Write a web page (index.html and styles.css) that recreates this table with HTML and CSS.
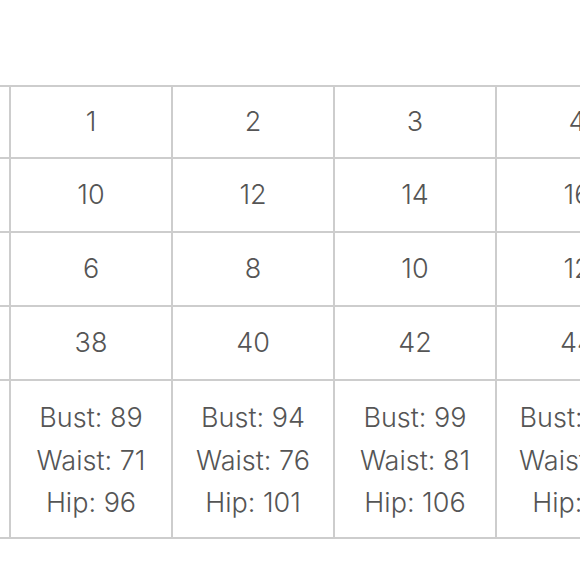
FILE: index.html
```html
<!DOCTYPE html>
<html lang="en">
<head>
<meta charset="utf-8">
<title>Size chart</title>
<link rel="stylesheet" href="styles.css">
</head>
<body>
<div class="wrap">
  <div class="chart">
    <div class="cell lead"></div>
    <div class="cell">1</div>
    <div class="cell">2</div>
    <div class="cell">3</div>
    <div class="cell">4</div>

    <div class="cell lead"></div>
    <div class="cell">10</div>
    <div class="cell">12</div>
    <div class="cell">14</div>
    <div class="cell">16</div>

    <div class="cell lead"></div>
    <div class="cell">6</div>
    <div class="cell">8</div>
    <div class="cell">10</div>
    <div class="cell">12</div>

    <div class="cell lead"></div>
    <div class="cell">38</div>
    <div class="cell">40</div>
    <div class="cell">42</div>
    <div class="cell">44</div>

    <div class="cell lead row-m"></div>
    <div class="cell row-m"><span>Bust: 89</span><span>Waist: 71</span><span>Hip: 96</span></div>
    <div class="cell row-m"><span>Bust: 94</span><span>Waist: 76</span><span>Hip: 101</span></div>
    <div class="cell row-m"><span>Bust: 99</span><span>Waist: 81</span><span>Hip: 106</span></div>
    <div class="cell row-m"><span>Bust: 104</span><span>Waist: 86</span><span>Hip: 111</span></div>
  </div>
</div>
</body>
</html>
```
FILE: styles.css
```css
html, body {
  margin: 0;
  padding: 0;
  background: #fff;
  overflow: hidden;
}
.wrap {
  width: 580px;
  overflow: hidden;
  padding-top: 85px;
}
.chart {
  display: grid;
  grid-template-columns: 11px 162px 162px 162px 162px;
  grid-template-rows: 72px 74px 74px 74px 158px;
  width: max-content;
  border-top: 2px solid #cdcdcd;
  font-family: "Inter", "Open Sans", sans-serif;
  font-weight: 350;
  font-size: 27px;
  color: #555;
}
.cell {
  box-sizing: border-box;
  border-right: 2px solid #cdcdcd;
  border-bottom: 2px solid #cdcdcd;
  display: flex;
  flex-direction: column;
  align-items: center;
  justify-content: center;
  text-align: center;
  white-space: nowrap;
  padding-bottom: 2px;
}
.row-m {
  padding-bottom: 0;
  padding-top: 4px;
}
.row-m span {
  line-height: 42.5px;
}
```
